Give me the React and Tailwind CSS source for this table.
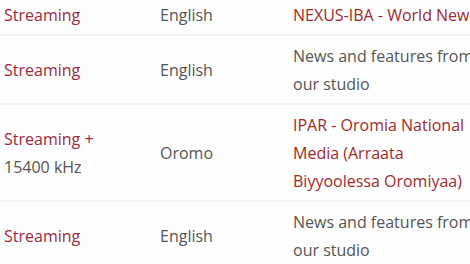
export default function App() {
  const rows = [
    {
      c1: [{ t: "Streaming", red: true }],
      c2: "English",
      c3: { t: "NEXUS-IBA - World News", red: true },
    },
    {
      c1: [{ t: "Streaming", red: true }],
      c2: "English",
      c3: { t: "News and features from our studio", red: false },
    },
    {
      c1: [
        { t: "Streaming +", red: true },
        { t: "15400 kHz", red: false },
      ],
      c2: "Oromo",
      c3: { t: "IPAR - Oromia National Media (Arraata Biyyoolessa Oromiyaa)", red: true },
    },
    {
      c1: [{ t: "Streaming", red: true }],
      c2: "English",
      c3: { t: "News and features from our studio", red: false },
    },
  ];
  return (
    <div
      className="w-[470px] h-[264px] overflow-hidden bg-[#fdfdfd] text-[16px] leading-[28px] text-[#555555]"
      style={{ fontFamily: '"Open Sans", sans-serif' }}
    >
      <div className="-mt-[5px] w-[560px]">
        {rows.map((r, i) => (
          <div
            key={i}
            className={`flex ${i < rows.length - 1 ? "border-b-2 border-[#f2f2f2]" : ""}`}
          >
            <div className="w-[156px] shrink-0 pl-[4px] pr-[4px] pt-[6px] pb-[5px] flex flex-col justify-center">
              {r.c1.map((p, j) => (
                <span key={j} className={p.red ? "text-[#9c2a3a]" : "text-[#555555]"}>
                  {p.t}
                </span>
              ))}
            </div>
            <div className="w-[133px] shrink-0 pl-[4px] pr-[4px] pt-[6px] pb-[5px] flex flex-col justify-center">
              <span>{r.c2}</span>
            </div>
            <div className="w-[208px] shrink-0 pl-[4px] pr-[4px] pt-[6px] pb-[5px] flex flex-col justify-center">
              <span className={r.c3.red ? "text-[#9e2b2c]" : "text-[#555555]"}>{r.c3.t}</span>
            </div>
          </div>
        ))}
      </div>
    </div>
  );
}
